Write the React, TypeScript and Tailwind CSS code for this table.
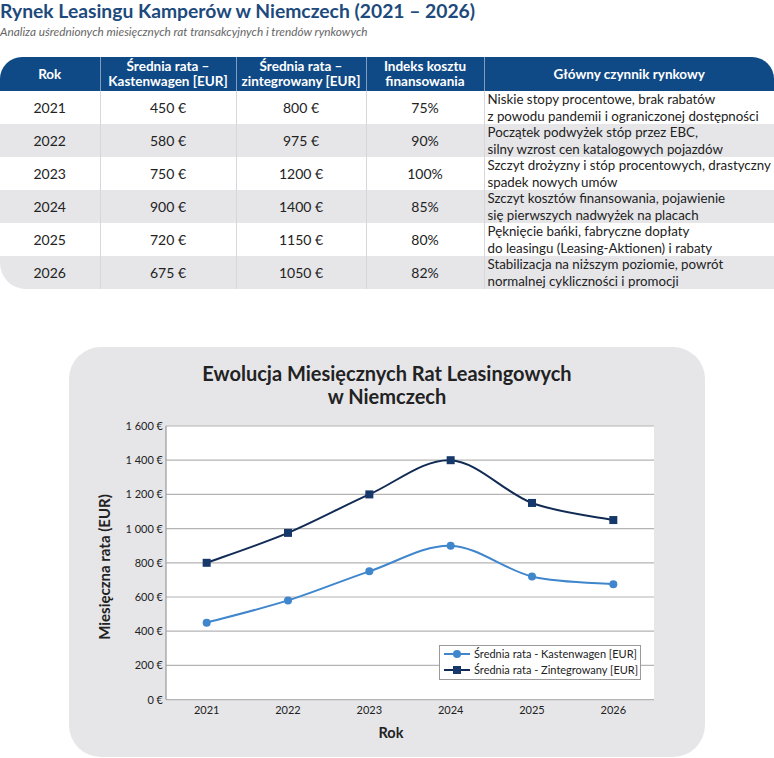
const rows = [
  { year: "2021", k: "450 €", z: "800 €", idx: "75%", factor: ["Niskie stopy procentowe, brak rabatów", "z powodu pandemii i ograniczonej dostępności"] },
  { year: "2022", k: "580 €", z: "975 €", idx: "90%", factor: ["Początek podwyżek stóp przez EBC,", "silny wzrost cen katalogowych pojazdów"] },
  { year: "2023", k: "750 €", z: "1200 €", idx: "100%", factor: ["Szczyt drożyzny i stóp procentowych, drastyczny", "spadek nowych umów"] },
  { year: "2024", k: "900 €", z: "1400 €", idx: "85%", factor: ["Szczyt kosztów finansowania, pojawienie", "się pierwszych nadwyżek na placach"] },
  { year: "2025", k: "720 €", z: "1150 €", idx: "80%", factor: ["Pęknięcie bańki, fabryczne dopłaty", "do leasingu (Leasing-Aktionen) i rabaty"] },
  { year: "2026", k: "675 €", z: "1050 €", idx: "82%", factor: ["Stabilizacja na niższym poziomie, powrót", "normalnej cykliczności i promocji"] },
];

const years = ["2021", "2022", "2023", "2024", "2025", "2026"];
const kasten = [450, 580, 750, 900, 720, 675];
const zinteg = [800, 975, 1200, 1400, 1150, 1050];

// plot geometry (svg coords, relative to the grey panel)
const PL = 97;
const PR = 585;
const PT = 17;
const PB = 290.6;
const step = (PR - PL) / 6;
const xAt = (i: number) => PL + step / 2 + i * step;
const yAt = (v: number) => PB - (v / 1600) * (PB - PT);

function smoothPath(vals: number[]) {
  const pts = vals.map((v, i) => [xAt(i), yAt(v)]);
  let d = `M${pts[0][0]},${pts[0][1]}`;
  for (let i = 0; i < pts.length - 1; i++) {
    const p0 = pts[i - 1] || pts[i];
    const p1 = pts[i];
    const p2 = pts[i + 1];
    const p3 = pts[i + 2] || p2;
    const c1x = p1[0] + (p2[0] - p0[0]) / 6;
    const c1y = p1[1] + (p2[1] - p0[1]) / 6;
    const c2x = p2[0] - (p3[0] - p1[0]) / 6;
    const c2y = p2[1] - (p3[1] - p1[1]) / 6;
    d += ` C${c1x},${c1y} ${c2x},${c2y} ${p2[0]},${p2[1]}`;
  }
  return d;
}

const LIGHT = "#3f86cc";
const DARK = "#112b55";
const FONT = "Lato, 'Liberation Sans', sans-serif";

function Chart() {
  return (
    <svg width="636" height="348" className="block">
      {/* plot area */}
      <rect x={PL} y={PT} width={PR - PL} height={PB - PT} fill="#ffffff" />
      {[0, 200, 400, 600, 800, 1000, 1200, 1400, 1600].map((v) => (
        <g key={v}>
          <line x1={PL} x2={PR} y1={yAt(v)} y2={yAt(v)} stroke="#b4b4b4" strokeWidth="1.2" />
          <text x={PL - 3} y={yAt(v) + 4} textAnchor="end" fontSize="11" fill="#222" fontFamily={FONT}>
            {v >= 1000 ? `${Math.floor(v / 1000)} ${String(v % 1000).padStart(3, "0")} €` : `${v} €`}
          </text>
        </g>
      ))}
      <line x1={PL} x2={PL} y1={PT} y2={PB} stroke="#9a9a9a" strokeWidth="1.2" />

      {years.map((y, i) => (
        <text key={y} x={xAt(i)} y={PB + 14} textAnchor="middle" fontSize="11" fill="#222" fontFamily={FONT}>
          {y}
        </text>
      ))}

      {/* series */}
      <path d={smoothPath(zinteg)} fill="none" stroke={DARK} strokeWidth="2" />
      {zinteg.map((v, i) => (
        <rect key={i} x={xAt(i) - 4} y={yAt(v) - 4} width="8" height="8" fill="#17386a" />
      ))}
      <path d={smoothPath(kasten)} fill="none" stroke={LIGHT} strokeWidth="2" />
      {kasten.map((v, i) => (
        <circle key={i} cx={xAt(i)} cy={yAt(v)} r="4" fill={LIGHT} />
      ))}

      {/* axis titles */}
      <text x={322} y={329} textAnchor="middle" fontSize="14.5" fontWeight="700" fill="#222" fontFamily={FONT}>
        Rok
      </text>
      <text
        transform="translate(41,158) rotate(-90)"
        textAnchor="middle"
        fontSize="15"
        fontWeight="700"
        fill="#222"
        fontFamily={FONT}
      >
        Miesięczna rata (EUR)
      </text>

      {/* legend */}
      <rect x="370.5" y="236.5" width="201" height="34" fill="#ffffff" stroke="#9a9a9a" />
      <line x1="375" x2="401" y1="245" y2="245" stroke={LIGHT} strokeWidth="2" />
      <circle cx="388" cy="245" r="4" fill={LIGHT} />
      <text x="405" y="249" fontSize="11" fill="#222" fontFamily={FONT}>
        Średnia rata - Kastenwagen [EUR]
      </text>
      <line x1="375" x2="401" y1="261" y2="261" stroke={DARK} strokeWidth="2" />
      <rect x="384" y="257" width="8" height="8" fill="#17386a" />
      <text x="405" y="265" fontSize="11" fill="#222" fontFamily={FONT}>
        Średnia rata - Zintegrowany [EUR]
      </text>
    </svg>
  );
}

export default function App() {
  return (
    <div className="w-[774px] h-[758px] overflow-hidden bg-white font-['Lato',sans-serif] text-[#222]">
      {/* header */}
      <h1 className="text-[19.3px] leading-[22px] font-bold text-[#1d4a7c]">
        Rynek Leasingu Kamperów w Niemczech (2021 – 2026)
      </h1>
      <p className="mt-[3px] text-[11.8px] leading-[14px] italic text-[#666]">
        Analiza uśrednionych miesięcznych rat transakcyjnych i trendów rynkowych
      </p>

      {/* table */}
      <table className="mt-[18px] w-[774px] table-fixed border-collapse">
        <colgroup>
          <col className="w-[100px]" />
          <col className="w-[136px]" />
          <col className="w-[130px]" />
          <col className="w-[118px]" />
          <col className="w-[290px]" />
        </colgroup>
        <thead>
          <tr className="h-[34px] text-white text-[13.5px] leading-[15px] font-bold">
            <th className="bg-[#0f4a87] rounded-tl-[22px] border-r border-[#7d9cc0] font-bold">Rok</th>
            <th className="bg-[#0f4a87] border-r border-[#7d9cc0] font-bold">
              Średnia rata –<br />Kastenwagen [EUR]
            </th>
            <th className="bg-[#0f4a87] border-r border-[#7d9cc0] font-bold">
              Średnia rata –<br />zintegrowany [EUR]
            </th>
            <th className="bg-[#0f4a87] border-r border-[#7d9cc0] font-bold">
              Indeks kosztu<br />finansowania
            </th>
            <th className="bg-[#0f4a87] rounded-tr-[22px] font-bold">Główny czynnik rynkowy</th>
          </tr>
        </thead>
        <tbody>
          {rows.map((r, i) => {
            const bg = i % 2 === 1 ? "bg-[#e6e6e9]" : "bg-white";
            const last = i === rows.length - 1;
            return (
              <tr key={r.year} className="h-[33px] text-[14px]">
                <td className={`${bg} ${last ? "rounded-bl-[26px]" : ""} border-r border-[#d6d6db] text-center`}>{r.year}</td>
                <td className={`${bg} border-r border-[#d6d6db] text-center`}>{r.k}</td>
                <td className={`${bg} border-r border-[#d6d6db] text-center`}>{r.z}</td>
                <td className={`${bg} border-r border-[#d6d6db] text-center`}>{r.idx}</td>
                <td className={`${bg} pl-[3px] text-[13.3px] leading-[16.5px] whitespace-nowrap`}>
                  {r.factor[0]}
                  <br />
                  {r.factor[1]}
                </td>
              </tr>
            );
          })}
        </tbody>
      </table>

      {/* chart panel */}
      <div className="mx-auto mt-[58px] w-[636px] h-[410px] rounded-[32px] bg-[#e6e6e9]">
        <h2 className="pt-[15px] h-[62px] text-center text-[20px] leading-[23px] font-bold text-[#222]">
          Ewolucja Miesięcznych Rat Leasingowych
          <br />w Niemczech
        </h2>
        <Chart />
      </div>
    </div>
  );
}
